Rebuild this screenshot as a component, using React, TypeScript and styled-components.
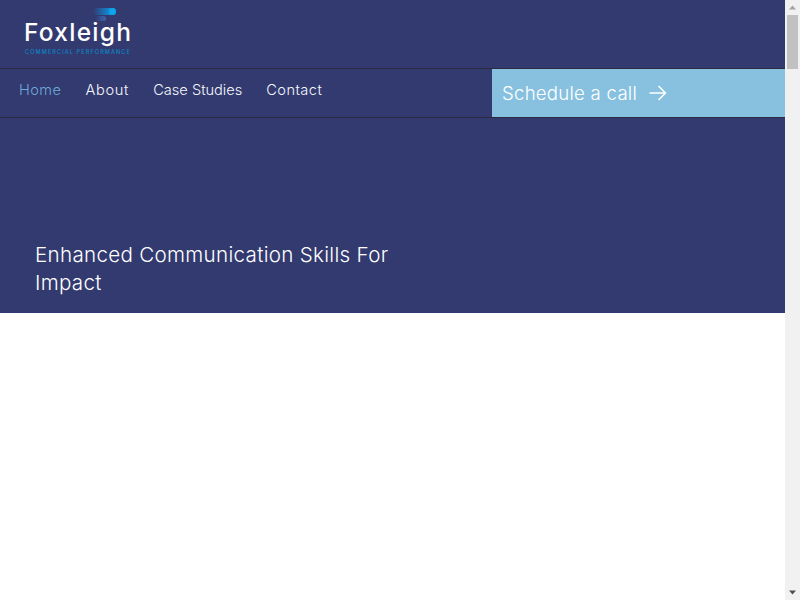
import React from "react";
import styled, { createGlobalStyle } from "styled-components";

const Global = createGlobalStyle`
  html, body { margin: 0; padding: 0; background: #fff; overflow: hidden; }
  body { font-family: Inter, "Liberation Sans", sans-serif; }
`;

const Viewport = styled.div`
  display: flex;
  width: 800px;
  height: 600px;
`;

const Page = styled.main`
  width: 785px;
  background: #fff;
`;

const Scrollbar = styled.aside`
  width: 15px;
  height: 600px;
  background: #f1f1f1;
  display: flex;
  flex-direction: column;
  align-items: center;
  justify-content: space-between;
`;

const ScrollTrack = styled.div`
  display: flex;
  flex-direction: column;
  align-items: center;
`;

const Arrow = styled.svg`
  display: block;
  width: 15px;
  height: 15px;
`;

const Thumb = styled.div`
  width: 11px;
  height: 54px;
  background: #c1c1c1;
`;

const TopBar = styled.header`
  height: 68px;
  background: #323a70;
  padding-left: 25px;
  display: flex;
  align-items: flex-start;
`;

const Logo = styled.div`
  position: relative;
  width: 107px;
  height: 68px;
  color: #fff;
`;

const LogoMark = styled.svg`
  position: absolute;
  left: 65px;
  top: 7px;
`;

const LogoName = styled.div`
  position: absolute;
  left: -1px;
  top: 17px;
  font-size: 24.5px;
  line-height: 30px;
  font-weight: 450;
  letter-spacing: 1.25px;
  white-space: nowrap;
`;

const LogoTag = styled.div`
  position: absolute;
  left: 0;
  top: 48px;
  font-size: 5.6px;
  line-height: 8px;
  font-weight: 500;
  letter-spacing: 1.07px;
  color: #0f85c4;
  white-space: nowrap;
`;

const NavBar = styled.nav`
  height: 48px;
  background: #323a70;
  border-top: 1px solid #2a2a40;
  border-bottom: 1px solid #2a2a40;
  display: flex;
  justify-content: space-between;
`;

const Links = styled.div`
  display: flex;
  gap: 24px;
  padding: 11px 0 0 19px;
`;

const NavLink = styled.a<{ $active?: boolean; $track: number }>`
  font-size: 14.6px;
  line-height: 20px;
  font-weight: 350;
  letter-spacing: ${(p) => p.$track}px;
  color: ${(p) => (p.$active ? "#6fa9d6" : "#f6f7fb")};
  white-space: nowrap;
`;

const CallButton = styled.a`
  width: 293px;
  height: 48px;
  padding: 0 0 1px 10px;
  box-sizing: border-box;
  background: #87c1df;
  color: #fff;
  display: flex;
  align-items: center;
  gap: 12px;
  font-size: 18.6px;
  font-weight: 350;
  letter-spacing: 0.25px;
  white-space: nowrap;
`;

const Hero = styled.section`
  height: 195px;
  background: #323a70;
  padding: 123px 0 0 35px;
  box-sizing: border-box;
`;

const HeroTitle = styled.h1`
  margin: 0;
  width: 380px;
  font-size: 20.6px;
  line-height: 28px;
  font-weight: 350;
  letter-spacing: 0.3px;
  color: #fff;
`;

export default function App() {
  return (
    <Viewport>
      <Global />
      <Page>
        <TopBar>
          <Logo>
            <LogoMark width="28" height="14" viewBox="0 0 28 14">
              <defs>
                <linearGradient id="bar1" x1="0" x2="1" y1="0" y2="0">
                  <stop offset="0" stopColor="#323a70" />
                  <stop offset="0.75" stopColor="#0f8fd8" />
                </linearGradient>
                <linearGradient id="bar2" x1="0" x2="1" y1="0" y2="0">
                  <stop offset="0" stopColor="#323a70" />
                  <stop offset="1" stopColor="#3f66ae" />
                </linearGradient>
              </defs>
              <rect x="3" y="1" width="23" height="7" rx="3.5" fill="url(#bar1)" />
              <circle cx="22.5" cy="4.5" r="3.5" fill="#0ca4ea" />
              <rect x="5" y="9" width="11" height="5" rx="2.5" fill="url(#bar2)" />
            </LogoMark>
            <LogoName>Foxleigh</LogoName>
            <LogoTag>COMMERCIAL PERFORMANCE</LogoTag>
          </Logo>
        </TopBar>
        <NavBar>
          <Links>
            <NavLink $active $track={0.45}>Home</NavLink>
            <NavLink $track={0.7}>About</NavLink>
            <NavLink $track={0}>Case Studies</NavLink>
            <NavLink $track={0.45}>Contact</NavLink>
          </Links>
          <CallButton>
            Schedule a call
            <svg width="18" height="16" viewBox="0 0 18 16" fill="none" stroke="#fff" strokeWidth="1.5">
              <path d="M0.5 8H16.5M9.5 1L16.5 8L9.5 15" />
            </svg>
          </CallButton>
        </NavBar>
        <Hero>
          <HeroTitle>Enhanced Communication Skills For Impact</HeroTitle>
        </Hero>
      </Page>
      <Scrollbar>
        <ScrollTrack>
          <Arrow viewBox="0 0 15 15">
            <path d="M7.5 5.5L11 9.5H4Z" fill="#a3a3a3" />
          </Arrow>
          <Thumb />
        </ScrollTrack>
        <Arrow viewBox="0 0 15 15">
          <path d="M4 5.5H11L7.5 9.5Z" fill="#505050" />
        </Arrow>
      </Scrollbar>
    </Viewport>
  );
}
